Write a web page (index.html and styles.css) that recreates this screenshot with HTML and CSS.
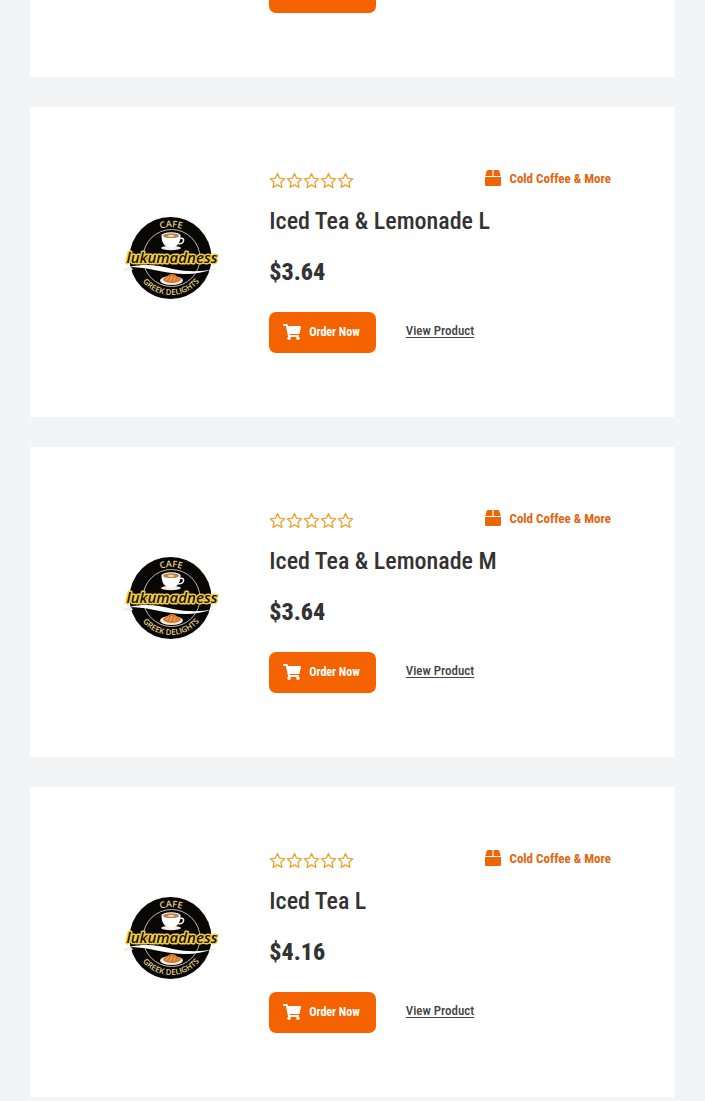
FILE: index.html
```html
<!DOCTYPE html>
<html lang="en">
<head>
    <meta charset="UTF-8">
    <meta name="viewport" content="width=device-width, initial-scale=1.0">
    <title>Menu</title>
    <link rel="stylesheet" href="styles.css">
</head>
<body>

    <svg class="sprite" aria-hidden="true">
        <symbol id="logo" viewBox="7 7 100 100">
            <circle cx="55.5" cy="53" r="41" fill="#080706"/>
            <circle cx="56.5" cy="53" r="28.5" fill="none" stroke="#e8e4dc" stroke-width="0.8"/>
            <path id="arc-top" d="M25 53a31 31 0 0 1 62 0" fill="none"/>
            <path id="arc-bottom" d="M19 53a37 37 0 0 0 74 0" fill="none"/>
            <text class="logo-cafe"><textPath href="#arc-top" startOffset="50%">CAFE</textPath></text>
            <text class="logo-greek"><textPath href="#arc-bottom" startOffset="50%">GREEK DELIGHTS</textPath></text>
            <!-- cup -->
            <ellipse cx="56" cy="43" rx="10" ry="2.2" fill="#f6efe6"/>
            <path d="M46.500 30.500c0 8 3.500 12 9.500 12s9.500-4 9.500-12z" fill="#fff"/>
            <path d="M65 33.500c5-1.500 5 5-1.500 5.500" fill="none" stroke="#fff" stroke-width="1.500"/>
            <ellipse cx="56" cy="30.500" rx="9.500" ry="3.200" fill="#fff"/>
            <ellipse cx="56" cy="30.700" rx="8" ry="2.400" fill="#b97f45"/>
            <path d="M52 31q4-2.500 8 0-4 2-8 0" fill="#f2d9b4"/>
            <!-- wave -->
            <path d="M14 62c18-4 31-1 44 2 14 3 29 3 40 0-13 5 -27 6-41 4-16-2-27-6-43-6z" fill="#fff"/>
            <path d="M8 64l8-2 2 3-8 1zM96 64l9-1-10 3z" fill="#eee"/>
            <!-- plate -->
            <ellipse cx="56.500" cy="75.500" rx="11.500" ry="4.500" fill="#f5ede2"/>
            <path d="M48 75q0-3 4-3 1-3 5-3t5 3q4 0 4 3-3 3-9 3t-9-3z" fill="#d8772b"/>
            <path d="M51 75l3-3m1 4l2-5m2 5l1-4m2 3l1-1" stroke="#f7c58d" stroke-width="0.8"/>
            <text class="logo-name" x="57" y="58">lukumadness</text>
        </symbol>
        <symbol id="star" viewBox="0 0 17 17">
            <path d="M8.500 1.500l2.100 4.700 5.100.6-3.800 3.500 1 5.100-4.400-2.500-4.400 2.500 1-5.100L1.300 6.800l5.100-.6z" fill="none" stroke="#eda22d" stroke-width="1.300" stroke-linejoin="round"/>
        </symbol>
        <symbol id="box" viewBox="0 0 16 16">
            <path d="M3.300 0h4.100v6H.3L1.600 1.200Q2 0 3.300 0zM8.600 0h4.100q1.300 0 1.700 1.200L15.700 6H8.600zM0 7h16v7.500q0 1.500-1.500 1.500h-13Q0 16 0 14.500z" fill="#ee6506"/>
        </symbol>
        <symbol id="cart" viewBox="0 0 576 512">
            <path fill="#fff" d="M528.120 301.319l47.273-208C578.806 78.301 567.391 64 551.990 64H159.208l-9.166-44.810C147.758 8.021 137.930 0 126.529 0H24C10.745 0 0 10.745 0 24v16c0 13.255 10.745 24 24 24h69.883l70.248 343.435C147.325 417.100 136 435.222 136 456c0 30.928 25.072 56 56 56s56-25.072 56-56c0-15.674-6.447-29.835-16.824-40h209.647C430.447 426.165 424 440.326 424 456c0 30.928 25.072 56 56 56s56-25.072 56-56c0-22.172-12.888-41.332-31.579-50.405l5.517-24.276c3.413-15.018-8.002-29.319-23.403-29.319H218.117l-6.545-32h293.145c11.206 0 20.920-7.754 23.403-18.681z"/>
        </symbol>
    </svg>

    <main class="products">
        <article class="product product-cut">
            <div class="details">
                <div class="actions">
                    <button type="button" class="order"><svg class="cart"><use href="#cart"/></svg>Order Now</button>
                    <a href="#" class="view">View Product</a>
                </div>
            </div>
        </article>

        <article class="product">
            <svg class="logo" role="img" aria-label="Cafe Lukumadness Greek Delights"><use href="#logo"/></svg>
            <div class="details">
                <div class="meta">
                    <div class="stars">
                        <svg><use href="#star"/></svg><svg><use href="#star"/></svg><svg><use href="#star"/></svg><svg><use href="#star"/></svg><svg><use href="#star"/></svg>
                    </div>
                    <a href="#" class="category"><svg class="box"><use href="#box"/></svg>Cold Coffee &amp; More</a>
                </div>
                <h2>Iced Tea &amp; Lemonade L</h2>
                <p class="price">$3.64</p>
                <div class="actions">
                    <button type="button" class="order"><svg class="cart"><use href="#cart"/></svg>Order Now</button>
                    <a href="#" class="view">View Product</a>
                </div>
            </div>
        </article>

        <article class="product">
            <svg class="logo" role="img" aria-label="Cafe Lukumadness Greek Delights"><use href="#logo"/></svg>
            <div class="details">
                <div class="meta">
                    <div class="stars">
                        <svg><use href="#star"/></svg><svg><use href="#star"/></svg><svg><use href="#star"/></svg><svg><use href="#star"/></svg><svg><use href="#star"/></svg>
                    </div>
                    <a href="#" class="category"><svg class="box"><use href="#box"/></svg>Cold Coffee &amp; More</a>
                </div>
                <h2>Iced Tea &amp; Lemonade M</h2>
                <p class="price">$3.64</p>
                <div class="actions">
                    <button type="button" class="order"><svg class="cart"><use href="#cart"/></svg>Order Now</button>
                    <a href="#" class="view">View Product</a>
                </div>
            </div>
        </article>

        <article class="product">
            <svg class="logo" role="img" aria-label="Cafe Lukumadness Greek Delights"><use href="#logo"/></svg>
            <div class="details">
                <div class="meta">
                    <div class="stars">
                        <svg><use href="#star"/></svg><svg><use href="#star"/></svg><svg><use href="#star"/></svg><svg><use href="#star"/></svg><svg><use href="#star"/></svg>
                    </div>
                    <a href="#" class="category"><svg class="box"><use href="#box"/></svg>Cold Coffee &amp; More</a>
                </div>
                <h2>Iced Tea L</h2>
                <p class="price">$4.16</p>
                <div class="actions">
                    <button type="button" class="order"><svg class="cart"><use href="#cart"/></svg>Order Now</button>
                    <a href="#" class="view">View Product</a>
                </div>
            </div>
        </article>
    </main>

</body>
</html>
```

FILE: styles.css
```css
* {
    box-sizing: border-box;
}
body {
    margin: 0;
    background-color: #f3f4f6;
    color: #333;
    font-family: "Roboto Condensed", "Open Sans Condensed", "Liberation Sans Narrow", sans-serif;
}
.sprite {
    position: absolute;
    width: 0;
    height: 0;
}
.products {
    display: flex;
    flex-direction: column;
    gap: 30px;
    padding: 0 30px;
    overflow: hidden;
}
.product {
    display: grid;
    grid-template-columns: 5fr 11fr;
    column-gap: 20px;
    align-items: center;
    padding: 63px 64px 64px;
    background: #fff;
}
/* first card is scrolled past the top edge */
.product-cut {
    margin-top: -28px;
    padding-top: 0;
}
.product-cut .details {
    grid-column: 2;
}
.logo {
    width: 100px;
    height: 100px;
    justify-self: center;
}
.logo-cafe,
.logo-greek {
    font-family: "Open Sans", sans-serif;
    font-weight: 600;
    text-anchor: middle;
    fill: #e5d18c;
}
.logo-cafe {
    font-size: 9px;
}
.logo-greek {
    font-size: 8px;
}
.logo-name {
    font-family: "Open Sans", sans-serif;
    font-size: 15px;
    font-style: italic;
    font-weight: 600;
    text-anchor: middle;
    fill: #191406;
    stroke: #f2cc45;
    stroke-width: 3px;
    stroke-linejoin: round;
    paint-order: stroke;
}
.meta {
    display: flex;
    justify-content: space-between;
    height: 19px;
}
.stars {
    display: flex;
    align-items: flex-end;
}
.stars svg {
    width: 17px;
    height: 17px;
}
.category {
    display: flex;
    gap: 8px;
    color: #e2650f;
    font-size: 13px;
    font-weight: bold;
    line-height: 18px;
    text-decoration: none;
}
.box {
    width: 16px;
    height: 16px;
}
h2 {
    margin: 16px 0 12px;
    font-size: 24px;
    font-weight: 500;
    line-height: 32px;
}
.price {
    margin: 0 0 17px;
    font-size: 24px;
    font-weight: 800;
    line-height: 46px;
}
.actions {
    display: flex;
    gap: 30px;
}
.order {
    display: flex;
    align-items: center;
    gap: 8px;
    height: 41px;
    padding: 0 16px 2px 14px;
    border: none;
    border-radius: 7px;
    background-color: #f56300;
    color: #fff;
    font-family: inherit;
    font-size: 12px;
    font-weight: bold;
    cursor: pointer;
}
.cart {
    width: 18px;
    height: 16px;
}
.view {
    color: #444;
    font-size: 13px;
    font-weight: 500;
    line-height: 38px;
    text-underline-offset: 2px;
}
```
